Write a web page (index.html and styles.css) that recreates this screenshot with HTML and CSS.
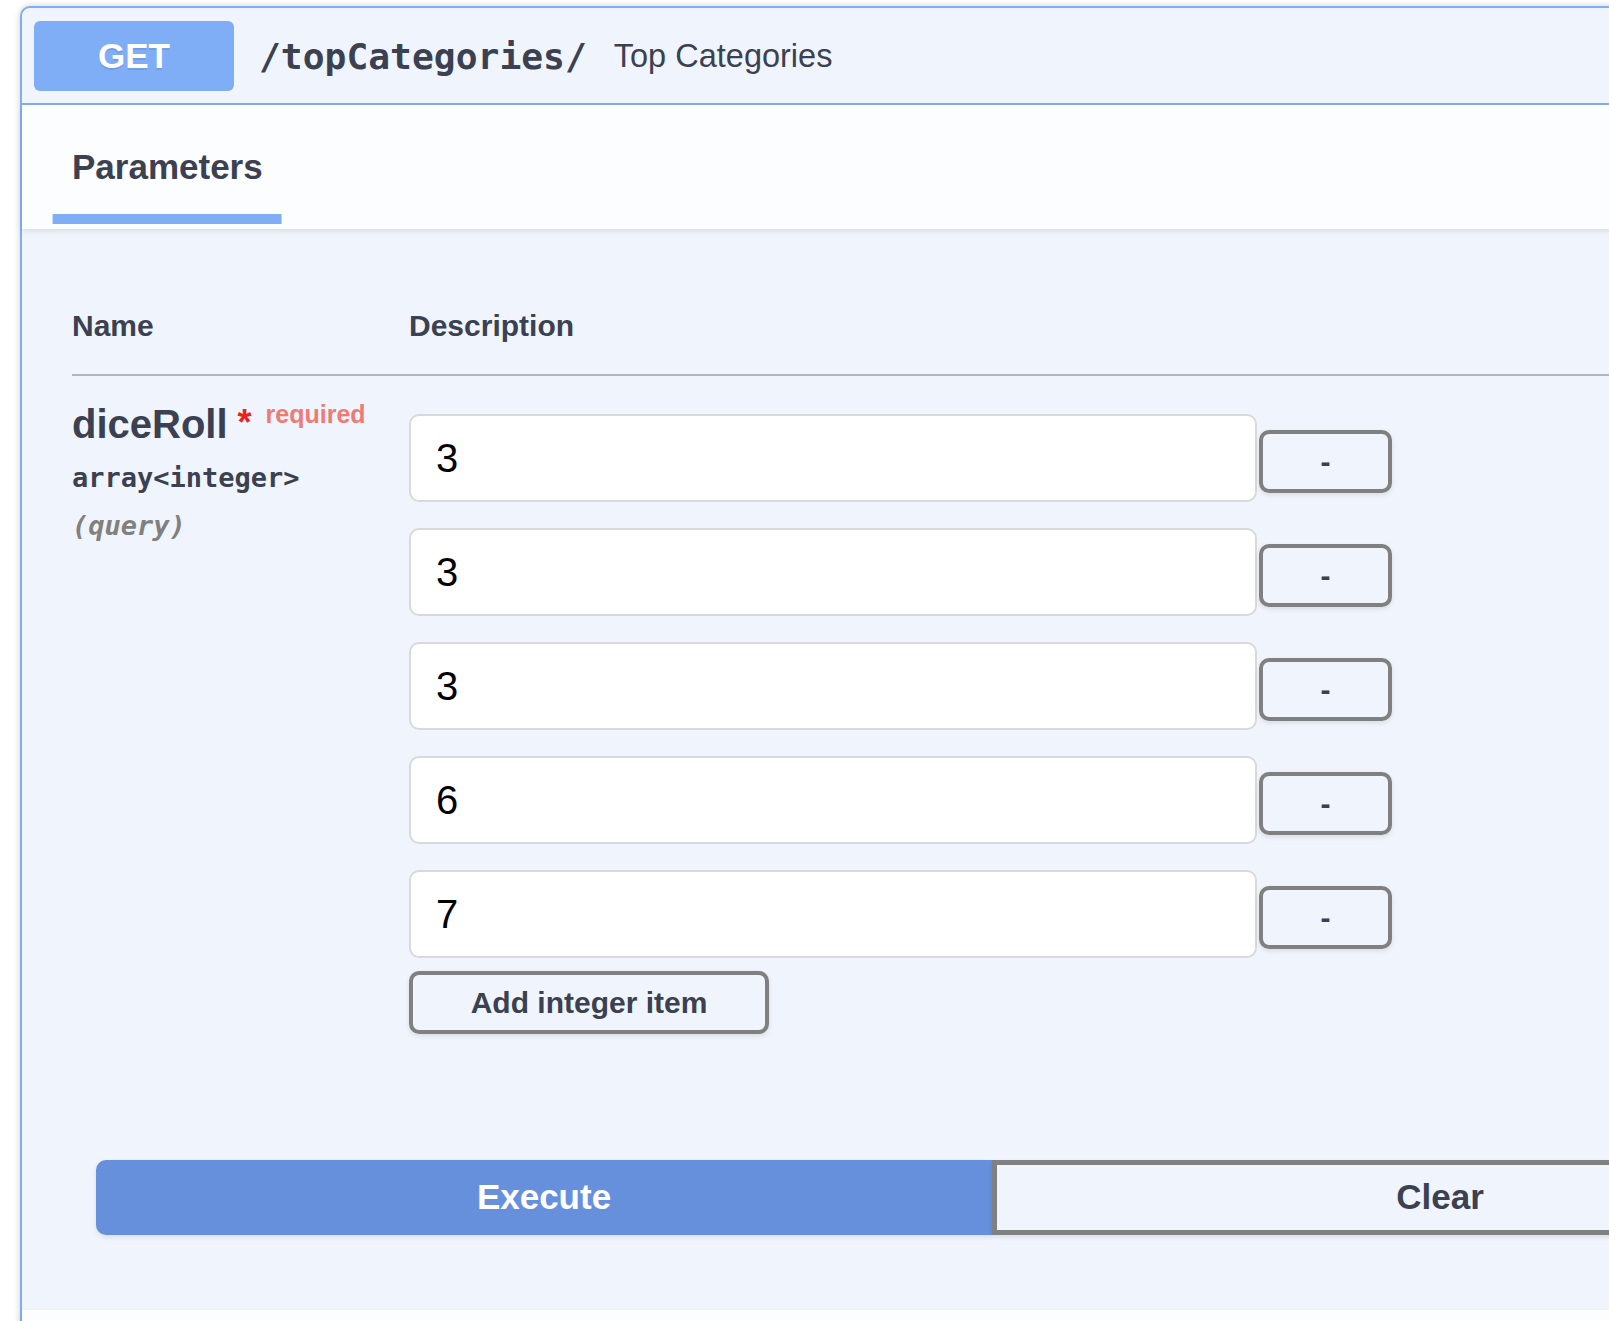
FILE: index.html
```html
<!DOCTYPE html>
<html lang="en">
<head>
<meta charset="utf-8">
<title>topCategories</title>
<link rel="stylesheet" href="styles.css">
</head>
<body>
<div class="opblock">
  <div class="summary">
    <span class="method">GET</span>
    <span class="path">/topCategories/</span>
    <span class="summary-desc">Top Categories</span>
  </div>
  <div class="section-header">
    <h4 class="tab"><span class="tab-label">Parameters</span></h4>
  </div>
  <div class="table-container">
    <table class="params">
      <colgroup><col class="col-name"><col class="col-desc"></colgroup>
      <thead>
        <tr><th>Name</th><th>Description</th></tr>
      </thead>
      <tbody>
        <tr>
          <td class="cell-name">
            <div class="param-name">diceRoll<span class="star">&nbsp;*</span><span class="req">required</span></div>
            <div class="param-type">array&lt;integer&gt;</div>
            <div class="param-in">(query)</div>
          </td>
          <td class="cell-desc">
            <div class="item"><input class="field" type="text" value="3"><button class="btn btn-sm">-</button></div>
            <div class="item"><input class="field" type="text" value="3"><button class="btn btn-sm">-</button></div>
            <div class="item"><input class="field" type="text" value="3"><button class="btn btn-sm">-</button></div>
            <div class="item"><input class="field" type="text" value="6"><button class="btn btn-sm">-</button></div>
            <div class="item"><input class="field" type="text" value="7"><button class="btn btn-sm">-</button></div>
            <button class="btn btn-add">Add integer item</button>
          </td>
        </tr>
      </tbody>
    </table>
  </div>
  <div class="btn-group">
    <button class="btn execute">Execute</button>
    <button class="btn clear">Clear</button>
  </div>
  <div class="responses-header"></div>
</div>
</body>
</html>
```

FILE: styles.css
```css
html, body {
  overflow: hidden;
}
body {
  margin: 0;
  background: #ffffff;
  font-family: "Liberation Sans", Arial, sans-serif;
  color: #3b4151;
}
.opblock {
  width: 1940px;
  margin: 6px 0 0 20px;
  border: 2px solid #80aef6;
  border-radius: 10px;
  background: #f0f5fd;
  box-shadow: 0 0 7px rgba(0, 0, 0, 0.19);
}
.summary {
  display: flex;
  align-items: center;
  padding: 13px 12px 12px 12px;
  border-bottom: 2px solid #80aef6;
}
.method {
  width: 200px;
  height: 70px;
  border-radius: 6px;
  background: #80aef6;
  color: #ffffff;
  font-weight: 700;
  font-size: 35px;
  line-height: 70px;
  text-align: center;
  text-shadow: 0 2px 0 rgba(0, 0, 0, 0.1);
}
.path {
  padding: 0 27px 0 25px;
  font-family: "DejaVu Sans Mono", "Liberation Mono", monospace;
  font-weight: 700;
  font-size: 36.3px;
  color: #3b4151;
}
.summary-desc {
  font-size: 32.5px;
  color: #3b4151;
}
.section-header {
  display: flex;
  align-items: center;
  height: 124px;
  padding: 0 50px;
  background: rgba(255, 255, 255, 0.8);
  box-shadow: 0 2px 5px rgba(0, 0, 0, 0.1);
}
.tab {
  margin: 0;
  font-size: 35px;
  line-height: 40px;
  font-weight: 700;
  color: #3b4151;
}
.tab-label {
  position: relative;
  display: inline-block;
}
.tab-label::after {
  content: "";
  position: absolute;
  left: 50%;
  bottom: -37px;
  width: 120%;
  height: 10px;
  transform: translateX(-50%);
  background: #80aef6;
}
.table-container {
  padding: 50px;
}
.params {
  width: 1685px;
  border-collapse: collapse;
  table-layout: fixed;
}
.col-name {
  width: 337px;
}
.params th {
  padding: 30px 0 31px 0;
  font-size: 30px;
  line-height: 34px;
  font-weight: 700;
  text-align: left;
  color: #3b4151;
  border-bottom: 2px solid #b2b5bd;
}
.params td {
  padding: 25px 0;
  vertical-align: top;
}
.param-name {
  font-size: 40px;
  line-height: 46px;
  font-weight: 700;
  color: #3b4151;
  white-space: nowrap;
}
.star {
  position: relative;
  top: -3px;
  font-size: 36px;
  color: #e8221f;
}
.req {
  position: relative;
  top: -15px;
  padding: 12px 12px 12px 14px;
  font-size: 25px;
  color: #ee7b74;
}
.param-type {
  padding: 8px 0 12px 0;
  font-family: "DejaVu Sans Mono", "Liberation Mono", monospace;
  font-size: 27px;
  line-height: 36px;
  font-weight: 700;
  color: #3b4151;
}
.param-in {
  font-family: "DejaVu Sans Mono", "Liberation Mono", monospace;
  font-size: 27px;
  line-height: 36px;
  font-style: italic;
  font-weight: 700;
  color: #808080;
}
.item {
  display: flex;
  align-items: flex-start;
}
.field {
  box-sizing: border-box;
  width: 848px;
  height: 88px;
  margin: 13px 0;
  padding: 0 25px;
  border: 2px solid #d9d9d9;
  border-radius: 10px;
  background: #ffffff;
  font-family: "Liberation Sans", Arial, sans-serif;
  font-size: 40px;
  color: #000000;
  outline: none;
}
.btn {
  box-sizing: border-box;
  border: 4px solid #808080;
  border-radius: 10px;
  background: transparent;
  box-shadow: 0 2px 5px rgba(0, 0, 0, 0.1);
  font-family: "Liberation Sans", Arial, sans-serif;
  font-weight: 700;
  color: #3b4151;
  padding: 0;
}
.btn-sm {
  width: 133px;
  height: 63px;
  margin: 29px 0 0 2px;
  font-size: 30px;
}
.btn-add {
  display: block;
  width: 360px;
  height: 63px;
  margin-top: 0;
  font-size: 30px;
}
.btn-group {
  display: flex;
  padding: 51px 74px 75px 74px;
}
.btn-group .btn {
  flex: 1 1 0;
  height: 75px;
  border-width: 5px;
  font-size: 35px;
  padding-bottom: 2px;
}
.execute {
  background: #6790dc;
  border-color: #6790dc;
  color: #ffffff;
  border-radius: 10px 0 0 10px;
}
.btn-group .clear {
  border-color: #808080;
  border-radius: 0 10px 10px 0;
  color: #3b4151;
}
.responses-header {
  height: 124px;
  background: rgba(255, 255, 255, 0.8);
  box-shadow: 0 2px 5px rgba(0, 0, 0, 0.1);
}
```
